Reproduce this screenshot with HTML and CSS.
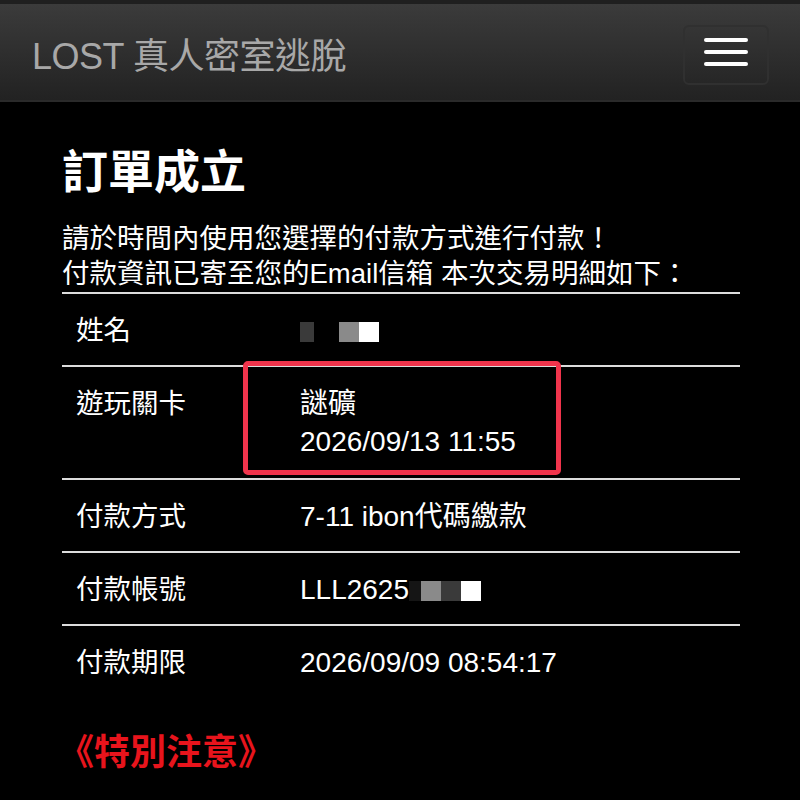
FILE: index.html
```html
<!DOCTYPE html>
<html lang="zh-Hant">
<head>
    <meta charset="UTF-8">
    <meta name="viewport" content="width=device-width, initial-scale=1.0">
    <title>LOST 真人密室逃脫 - 訂單成立</title>
    <link rel="stylesheet" href="styles.css">
</head>
<body>
    <div class="navbar">
        <div class="brand">LOST 真人密室逃脫</div>
        <button class="menu-toggle" aria-label="menu">
            <span class="bar"></span>
            <span class="bar"></span>
            <span class="bar"></span>
        </button>
    </div>

    <div class="content">
        <h1>訂單成立</h1>
        <p class="notice">請於時間內使用您選擇的付款方式進行付款！<br>付款資訊已寄至您的Email信箱 本次交易明細如下：</p>

        <table class="order-table">
            <tr>
                <td class="label">姓名</td>
                <td class="value">
                    <span class="blur b-dark"></span><span class="gap"></span><span class="blur b-mid"></span><span class="blur b-white"></span>
                </td>
            </tr>
            <tr class="game-row">
                <td class="label">遊玩關卡</td>
                <td class="value">
                    謎礦<br>2026/09/13 11:55
                    <div class="highlight"></div>
                </td>
            </tr>
            <tr>
                <td class="label">付款方式</td>
                <td class="value">7-11 ibon代碼繳款</td>
            </tr>
            <tr>
                <td class="label">付款帳號</td>
                <td class="value">LLL2625<span class="blur b-black"></span><span class="blur b-mid"></span><span class="blur b-dark"></span><span class="blur b-white"></span></td>
            </tr>
            <tr>
                <td class="label">付款期限</td>
                <td class="value">2026/09/09 08:54:17</td>
            </tr>
        </table>

        <div class="warning">《特別注意》</div>
    </div>
</body>
</html>
```

FILE: styles.css
```css
body {
    margin: 0;
    background-color: #000;
    color: #fff;
    font-family: 'Liberation Sans', 'Noto Sans CJK TC', sans-serif;
    overflow: hidden;
}
.navbar {
    height: 96px;
    border-top: 4px solid #1f1f1f;
    border-bottom: 2px solid #2a2a2a;
    background-image: linear-gradient(to bottom, #3b3b3b, #222);
    display: flex;
    align-items: center;
    justify-content: space-between;
    padding: 0 32px;
}
.brand {
    color: #a8a8a8;
    font-size: 36px;
    letter-spacing: -0.5px;
    margin-top: 2px;
}
.menu-toggle {
    width: 86px;
    height: 60px;
    margin-right: -1px;
    margin-top: 6px;
    background: transparent;
    border: 2px solid #303030;
    border-radius: 6px;
    display: flex;
    flex-direction: column;
    align-items: center;
    justify-content: center;
    gap: 8px;
    padding: 0;
    padding-bottom: 6px;
}
.menu-toggle .bar {
    display: block;
    width: 44px;
    height: 4px;
    border-radius: 2px;
    background-color: #fff;
}
.content {
    padding: 40px 60px 0 62px;
}
h1 {
    margin: 0;
    font-size: 46px;
    font-weight: bold;
    line-height: 60px;
}
.notice {
    margin: 19px 0 0;
    font-size: 27.5px;
    line-height: 35px;
}
.order-table {
    width: 678px;
    margin-top: 1px;
    border-collapse: collapse;
    border-top: 2px solid #dcdcdc;
}
.order-table td {
    padding: 18px 14px 15px;
    font-size: 27.5px;
    line-height: 38px;
    vertical-align: top;
}
.order-table tr + tr td {
    border-top: 2px solid #dcdcdc;
}
.order-table .game-row td {
    padding-bottom: 17px;
}
.order-table .label {
    width: 196px;
}
.order-table .value {
    position: relative;
    font-size: 28px;
}
.blur {
    display: inline-block;
    width: 20px;
    height: 20px;
    vertical-align: -2px;
}
.gap {
    display: inline-block;
    width: 25px;
}
.b-dark { background-color: #3a3a3a; }
.b-mid { background-color: #8a8a8a; }
.b-white { background-color: #fff; }
.b-black { background-color: #151515; width: 12px; }
.order-table tr:first-child .b-dark { width: 14px; }
.highlight {
    position: absolute;
    left: -43px;
    top: -6px;
    width: 308px;
    height: 104px;
    border: 5px solid #f0344c;
    border-radius: 5px;
}
.warning {
    margin-top: 36px;
    margin-left: -4px;
    color: #e8141c;
    font-size: 36px;
    font-weight: bold;
    line-height: 40px;
}
```
